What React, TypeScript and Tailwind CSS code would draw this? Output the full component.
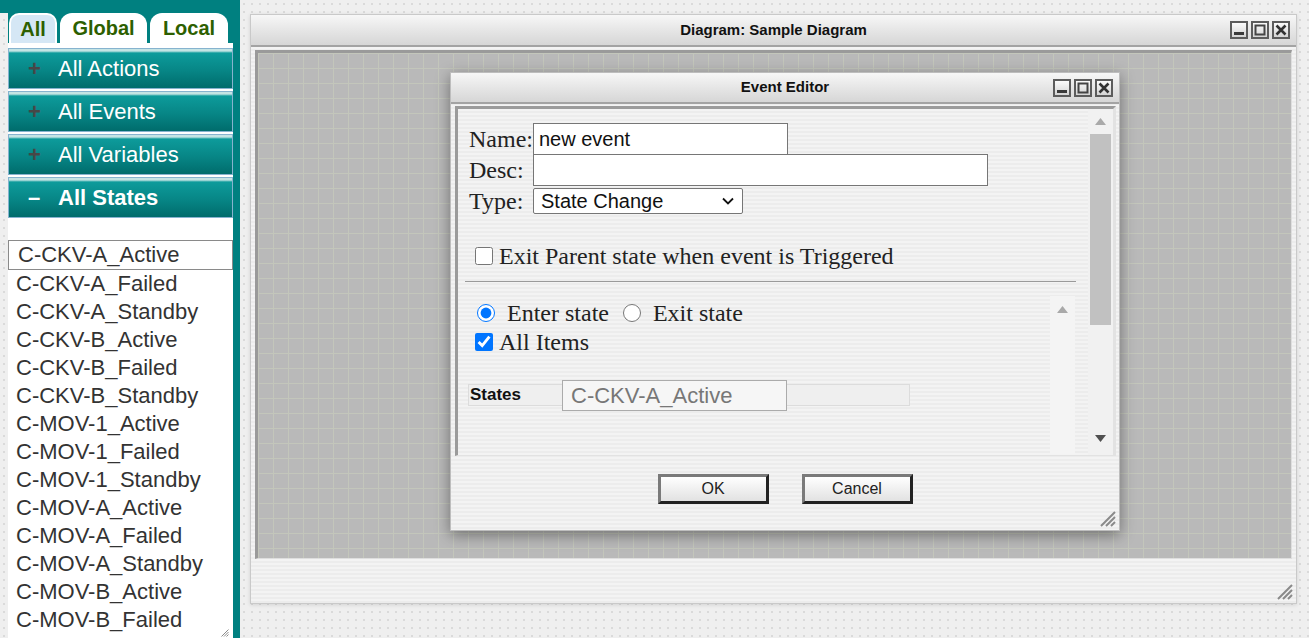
import React from "react"

const states = [
  "C-CKV-A_Active",
  "C-CKV-A_Failed",
  "C-CKV-A_Standby",
  "C-CKV-B_Active",
  "C-CKV-B_Failed",
  "C-CKV-B_Standby",
  "C-MOV-1_Active",
  "C-MOV-1_Failed",
  "C-MOV-1_Standby",
  "C-MOV-A_Active",
  "C-MOV-A_Failed",
  "C-MOV-A_Standby",
  "C-MOV-B_Active",
  "C-MOV-B_Failed",
]

const sections = [
  { label: "All Actions", open: false },
  { label: "All Events", open: false },
  { label: "All Variables", open: false },
  { label: "All States", open: true },
]

function CtlButton({ kind }: { kind: "min" | "max" | "close" }) {
  return (
    <div className="w-[18px] h-[18px] border-2 border-[#5c5c5c] bg-[linear-gradient(#fbfbfb,#d4d4d4)] flex items-center justify-center">
      <svg width="14" height="14" viewBox="0 0 14 14">
        {kind === "min" && <rect x="2" y="9" width="10" height="3" fill="#3a3a3a" />}
        {kind === "max" && (
          <rect x="2.5" y="2.5" width="9" height="9" fill="none" stroke="#444" strokeWidth="2" />
        )}
        {kind === "close" && (
          <path d="M2.5 2.5L11.5 11.5M11.5 2.5L2.5 11.5" stroke="#333" strokeWidth="2.6" />
        )}
      </svg>
    </div>
  )
}

function WinButtons() {
  return (
    <div className="flex gap-[3px]">
      <CtlButton kind="min" />
      <CtlButton kind="max" />
      <CtlButton kind="close" />
    </div>
  )
}

function Grip() {
  return (
    <svg width="18" height="18" viewBox="0 0 18 18">
      <path d="M3 17L17 3M8 17L17 8M13 17L17 13" stroke="#8a8a8a" strokeWidth="2" />
    </svg>
  )
}

function TitleBar({ title, small }: { title: string; small?: boolean }) {
  return (
    <div
      className={`shrink-0 grid grid-cols-[1fr_auto_1fr] items-center ${
        small ? "h-[31px]" : "h-[32px]"
      } border-b-2 border-[#a3a3a3] bg-[linear-gradient(#f7f7f7,#e6e6e6_50%,#d6d6d6)]`}
    >
      <div />
      <div className="text-[15px] font-bold text-[#111]">{title}</div>
      <div className="flex justify-end pr-[6px]">
        <WinButtons />
      </div>
    </div>
  )
}

function Sidebar() {
  return (
    <div className="w-[240px] shrink-0 h-[638px] flex flex-col">
      <div className="h-[13px] shrink-0 bg-[#008080]" />
      <div className="flex flex-1 min-h-0">
        <div className="w-[8px]" />
        <div className="flex-1 flex flex-col bg-white relative overflow-hidden">
          {/* tabs */}
          <div className="shrink-0 flex items-end gap-[3px] h-[30px] bg-[#008080] text-[20px] font-bold text-[#2d5f00]">
            <div className="w-[48px] h-full ml-[1px] pt-[2px] px-[2px] bg-white rounded-t-[10px]">
              <div className="h-full bg-[#d5e7f5] rounded-t-[8px] flex items-center justify-center">All</div>
            </div>
            <div className="w-[87px] h-full bg-white rounded-t-[12px] flex items-center justify-center">Global</div>
            <div className="w-[78px] h-full bg-white rounded-t-[12px] flex items-center justify-center">Local</div>
          </div>
          <div className="h-[5px] shrink-0" />

          {sections.map((s, i) => (
            <div
              key={s.label}
              className={`shrink-0 h-[41px] border border-[#86b3cf] bg-[linear-gradient(#c4e4e4_0px,#c4e4e4_2px,#0d9b9b_4px,#078686_55%,#006c6c_100%)] flex items-center text-white text-[22px] ${
                i > 0 ? "mt-[2px]" : ""
              } ${s.open ? "font-bold" : ""}`}
            >
              <span className={`w-[49px] pl-[19px] font-bold ${s.open ? "text-white" : "text-[#474747]"}`}>
                {s.open ? "–" : "+"}
              </span>
              {s.label}
            </div>
          ))}

          <div className="h-[22px] shrink-0" />
          <div className="shrink-0 text-[22px] text-[#333] leading-[28px]">
            {states.map((st, i) => (
              <div
                key={st}
                className={
                  i === 0
                    ? "h-[30px] border border-[#8a8a8a] pl-[9px] flex items-center"
                    : "h-[28px] pl-[8px] flex items-center"
                }
              >
                {st}
              </div>
            ))}
          </div>
          <div className="absolute right-[4px] bottom-[1px] scale-50 origin-bottom-right">
            <Grip />
          </div>
        </div>
        <div className="w-[7px] bg-[#008080]" />
      </div>
    </div>
  )
}

function EventEditor() {
  return (
    <div className="absolute left-[199px] top-[57px] w-[670px] h-[459px] border border-[#bdbdbd] shadow-[0_4px_14px_rgba(0,0,0,0.4)] flex flex-col bg-[repeating-linear-gradient(#f3f3f3_0px,#f3f3f3_2px,#ececec_2px,#ececec_4px)]">
      <TitleBar title="Event Editor" small />

      {/* panel */}
      <div className="shrink-0 mt-[2px] ml-[4px] mr-[3px] h-[350px] border-t-[3px] border-l-[3px] border-r-[3px] border-b border-t-[#9b9b9b] border-l-[#9b9b9b] border-r-[#e2e2e2] border-b-[#e2e2e2] flex">
        <div className="flex-1 pl-[11px] pt-[14px] font-['Liberation_Serif',serif] text-[24px] text-[#222]">
          <div className="flex items-center h-[32px]">
            <span className="w-[64px] shrink-0 whitespace-nowrap">Name:</span>
            <input
              readOnly
              value="new event"
              className="w-[255px] h-[32px] border border-[#767676] bg-white pl-[5px] text-[20px] text-[#111] font-['Liberation_Sans',Arial,sans-serif] outline-none"
            />
          </div>
          <div className="flex items-center h-[32px] mt-[-1px]">
            <span className="w-[64px] shrink-0">Desc:</span>
            <input
              readOnly
              value=""
              className="w-[455px] h-[32px] border border-[#767676] bg-white outline-none"
            />
          </div>
          <div className="flex items-center h-[26px] mt-[2px]">
            <span className="w-[64px] shrink-0">Type:</span>
            <div className="relative w-[210px] h-[26px]">
              <select
                defaultValue="sc"
                className="block appearance-none w-full h-full border border-[#767676] rounded-[2px] bg-white pl-[7px] py-0 leading-[22px] text-[20px] text-[#111] font-['Liberation_Sans',Arial,sans-serif] outline-none"
              >
                <option value="sc">State Change</option>
              </select>
              <svg className="absolute right-[9px] top-[9px]" width="12" height="8" viewBox="0 0 12 8">
                <path d="M1 1.5L6 6.5L11 1.5" fill="none" stroke="#111" strokeWidth="1.8" />
              </svg>
            </div>
          </div>

          <label className="flex items-center h-[22px] mt-[31px] gap-[6px] pl-[6px]">
            <input type="checkbox" className="w-[18px] h-[18px]" />
            <span>Exit Parent state when event is Triggered</span>
          </label>

          <div className="mt-[14px] ml-[-4px] w-[611px] h-px bg-[#9a9a9a]" />

          {/* inner scroll area */}
          <div className="mt-[14px] ml-[-11px] w-[617px] h-[158px] flex">
            <div className="flex-1 pt-[6px]">
              <div className="flex items-center h-[22px] pl-[19px]">
                <input type="radio" name="mode" defaultChecked className="w-[18px] h-[18px]" />
                <span className="ml-[12px]">Enter state</span>
                <input type="radio" name="mode" className="w-[18px] h-[18px] ml-[14px]" />
                <span className="ml-[12px]">Exit state</span>
              </div>
              <label className="flex items-center h-[22px] mt-[7px] pl-[17px] gap-[6px]">
                <input type="checkbox" defaultChecked className="w-[18px] h-[18px]" />
                <span>All Items</span>
              </label>
              <div className="mt-[31px] ml-[10px] w-[442px] h-[22px] border border-[#dcdcdc] bg-[#efefef] flex items-center font-['Liberation_Sans',Arial,sans-serif]">
                <span className="w-[93px] pl-[1px] text-[17px] font-bold text-[#111]">States</span>
                <input
                  readOnly
                  value="C-CKV-A_Active"
                  className="shrink-0 w-[225px] h-[31px] border border-[#ababab] bg-[#f6f6f6] pl-[8px] text-[22px] text-[#777] outline-none"
                />
              </div>
            </div>
            <div className="w-[25px] bg-[#f4f4f4] flex justify-center pt-[10px]">
              <svg width="11" height="7" viewBox="0 0 11 7">
                <path d="M0 7L5.5 0L11 7Z" fill="#a9a9a9" />
              </svg>
            </div>
          </div>
        </div>

        {/* outer scrollbar */}
        <div className="w-[25px] bg-[#f1f1f1] flex flex-col">
          <div className="h-[25px] flex items-center justify-center">
            <svg width="11" height="7" viewBox="0 0 11 7">
              <path d="M0 7L5.5 0L11 7Z" fill="#a9a9a9" />
            </svg>
          </div>
          <div className="ml-[2px] w-[21px] h-[191px] bg-[#c1c1c1]" />
          <div className="flex-1" />
          <div className="h-[25px] mb-[4px] flex items-center justify-center">
            <svg width="11" height="7" viewBox="0 0 11 7">
              <path d="M0 0L11 0L5.5 7Z" fill="#505050" />
            </svg>
          </div>
        </div>
      </div>

      <div className="flex justify-center gap-[33px] mt-[18px] font-['Liberation_Sans',Arial,sans-serif]">
        <button className="w-[111px] h-[30px] border-[3px] border-t-[#7a7a7a] border-l-[#7a7a7a] border-r-[#222] border-b-[#222] bg-[linear-gradient(#ffffff,#f0f0f0_50%,#e2e2e2)] text-[16px] text-[#222]">
          OK
        </button>
        <button className="w-[111px] h-[30px] border-[3px] border-t-[#7a7a7a] border-l-[#7a7a7a] border-r-[#222] border-b-[#222] bg-[linear-gradient(#ffffff,#f0f0f0_50%,#e2e2e2)] text-[16px] text-[#222]">
          Cancel
        </button>
      </div>
      <div className="absolute right-[3px] bottom-[3px]">
        <Grip />
      </div>
    </div>
  )
}

function DiagramWindow() {
  return (
    <div className="relative ml-[10px] mt-[14px] w-[1047px] h-[590px] border border-[#c9c9c9] shadow-[0_1px_4px_rgba(0,0,0,0.12)] flex flex-col bg-[repeating-linear-gradient(#f3f3f3_0px,#f3f3f3_2px,#ececec_2px,#ececec_4px)]">
      <TitleBar title="Diagram: Sample Diagram" />
      <div className="px-[4px] pt-[3px]">
        <div className="h-[509px] border-t-[3px] border-l-[3px] border-r border-b border-t-[#9a9a9a] border-l-[#9a9a9a] border-r-[#dedede] border-b-[#dedede] bg-[#b9b9b9] bg-[linear-gradient(#c3c6bb_1px,transparent_1px),linear-gradient(90deg,#c3c6bb_1px,transparent_1px)] bg-[length:15px_15px]" />
      </div>
      <div className="absolute right-[3px] bottom-[3px]">
        <Grip />
      </div>
      <EventEditor />
    </div>
  )
}

export default function App() {
  return (
    <div className="w-[1309px] h-[638px] overflow-hidden flex font-['Liberation_Sans',Arial,sans-serif] bg-[#efefef] bg-[radial-gradient(circle,#dadada_1px,transparent_1.2px)] bg-[length:8px_8px]">
      <Sidebar />
      <div className="flex-1 h-[638px]">
        <DiagramWindow />
      </div>
    </div>
  )
}
